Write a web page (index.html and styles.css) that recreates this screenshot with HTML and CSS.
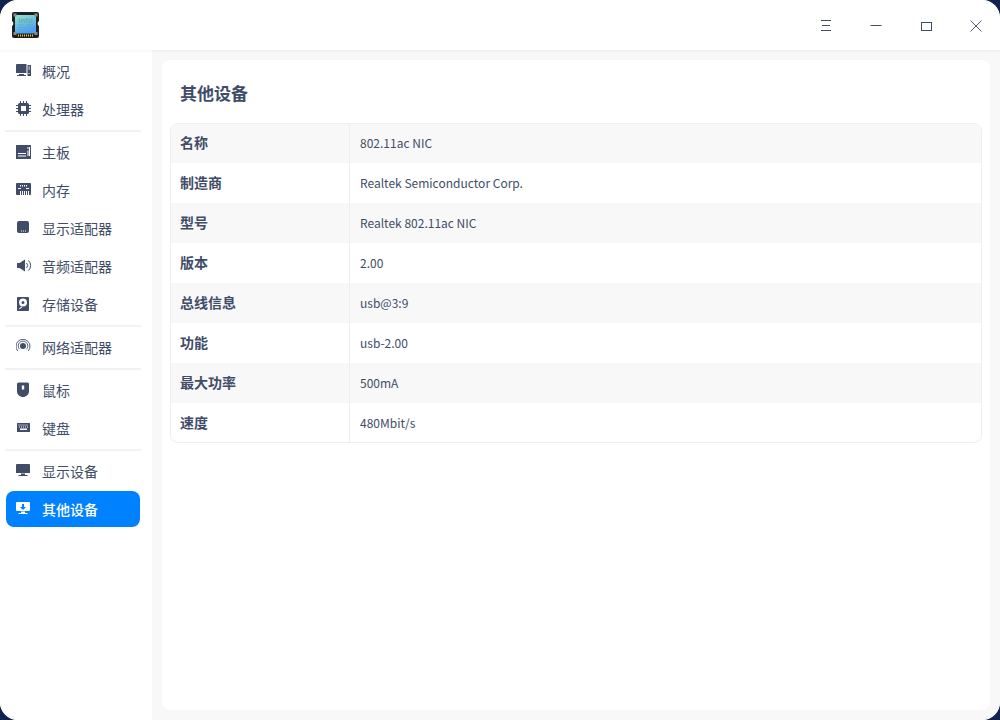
FILE: index.html
```html
<!DOCTYPE html>
<html lang="zh-CN">
<head>
<meta charset="utf-8">
<title>设备管理器</title>
<link rel="stylesheet" href="styles.css">
</head>
<body>
<div class="window">
  <header class="titlebar">
    <svg class="logo" width="30" height="28" viewBox="0 0 30 28">
      <defs><linearGradient id="lg" x1="0" y1="0" x2="0.4" y2="1"><stop offset="0" stop-color="#8fe8c4"/><stop offset="1" stop-color="#4f9cf5"/></linearGradient></defs>
      <path d="M3 1h23a2 2 0 0 1 2 2v7a3 3 0 0 0 0 5v10a2 2 0 0 1-2 2H3a2 2 0 0 1-2-2V15a3 3 0 0 0 0-5V3a2 2 0 0 1 2-2z" fill="#1d1f21"/>
      <rect x="4" y="4" width="21" height="18.500" fill="url(#lg)"/>
      <text x="14.500" y="11.500" class="logo-text" text-anchor="middle">info</text>
      <path d="M7 14h6M15 14h7M7 16.500h15M7 19h9" stroke="#5aa6d8" stroke-width="1"/>
      <path d="M7 24.500h15" stroke="#f2c230" stroke-width="2" stroke-dasharray="1 1"/>
      <g fill="#8a8a8a"><rect x="2.500" y="2.500" width="3" height="3"/><rect x="23.500" y="2.500" width="3" height="3"/><rect x="2.500" y="21" width="3" height="3"/><rect x="23.500" y="21" width="3" height="3"/></g>
    </svg>
    <div class="controls">
      <button class="ctl"><svg width="12" height="12" viewBox="0 0 12 12"><path d="M1 .5h10M2 5.500h8M1 10.500h10" stroke="#414d68" fill="none"/></svg></button>
      <button class="ctl"><svg width="12" height="12" viewBox="0 0 12 12"><path d="M.500 5.500h11" stroke="#414d68" fill="none"/></svg></button>
      <button class="ctl"><svg width="12" height="12" viewBox="0 0 12 12"><rect x="1.500" y="2.500" width="10" height="8" stroke="#414d68" fill="none"/></svg></button>
      <button class="ctl"><svg width="12" height="12" viewBox="0 0 12 12"><path d="M.5.500l11 11M11.500.500l-11 11" stroke="#414d68" stroke-width=".9" fill="none"/></svg></button>
    </div>
  </header>
  <div class="body">
    <nav class="sidebar">
      <div class="group">
        <a class="item"><svg class="ic" viewBox="0 0 16 16"><path d="M1 1h9.500v9H0V2a1 1 0 0 1 1-1zM3 11h5v1h2v1H1v-1h2z"/><path fill-rule="evenodd" d="M11.500 2H15v11h-3.500zM12.500 3.500v1h1.500v-1zM12.500 5.500v1h1.500v-1zM12.500 10v1h1v-1z"/></svg>概况</a>
        <a class="item"><svg class="ic" viewBox="0 0 16 16"><path fill-rule="evenodd" d="M3.500 2h8A1.500 1.500 0 0 1 13 3.500v8a1.500 1.500 0 0 1-1.500 1.500h-8A1.500 1.500 0 0 1 2 11.500v-8A1.500 1.500 0 0 1 3.500 2zM5 5v5h5V5z"/><path d="M4.500 0v2M7.500 0v2M10.500 0v2M4.500 13v2M7.500 13v2M10.500 13v2M0 4.500h2M0 7.500h2M0 10.500h2M13 4.500h2M13 7.500h2M13 10.500h2" stroke="#414d68" fill="none"/></svg>处理器</a>
      </div>
      <div class="group">
        <a class="item"><svg class="ic" viewBox="0 0 16 16"><path d="M.5 1h14a.5.500 0 0 1 .5.500v13a.5.500 0 0 1-.5.500H.5a.5.500 0 0 1-.5-.500v-13A.5.500 0 0 1 .5 1z"/><path d="M2 9.500h8M2 12h8M12 3v2M12 6.500v5.500M13.500 3v9" stroke="#fff" fill="none"/></svg>主板</a>
        <a class="item"><svg class="ic" viewBox="0 0 16 16"><path fill-rule="evenodd" d="M1 1h13a1 1 0 0 1 1 1v10a1 1 0 0 1-1 1h-1V9H3v4H1a1 1 0 0 1-1-1V2a1 1 0 0 1 1-1zM4 3v1.500h1V3zM6 3v1.500h1V3zM8 3v1.500h1V3zM10 3v1.500h1V3zM2 6v1h3V6zM10 6v1h3V6z"/><path d="M3 9h1v4H3zM5 9h1v4H5zM7 9h1v4H7zM9 9h1v4H9zM11 9h1v4h-1z"/></svg>内存</a>
        <a class="item"><svg class="ic" viewBox="0 0 16 16"><path fill-rule="evenodd" d="M3 1h8a2 2 0 0 1 2 2v8a2 2 0 0 1-2 2H3a2 2 0 0 1-2-2V3a2 2 0 0 1 2-2zM5 10.500v1h1v-1zM7 10.500v1h1v-1zM9 10.500v1h1v-1z"/></svg>显示适配器</a>
        <a class="item"><svg class="ic" viewBox="0 0 16 16"><path d="M1 5h2.500L9 1.500v12L3.500 10H1z"/><path d="M10.500 5a3.500 3.500 0 0 1 0 5M12.500 2.500a7 7 0 0 1 0 10" fill="none" stroke="#414d68"/></svg>音频适配器</a>
        <a class="item"><svg class="ic" viewBox="0 0 16 16"><path fill-rule="evenodd" d="M2 1h10a1 1 0 0 1 1 1v12a1 1 0 0 1-1 1H2a1 1 0 0 1-1-1V2a1 1 0 0 1 1-1zM7 2.500a4 4 0 1 0 0 8 4 4 0 0 0 0-8zM7 5a1.500 1.500 0 1 1 0 3 1.500 1.500 0 0 1 0-3zM3 12.500l2.500-2 .7.800-2.500 2z"/></svg>存储设备</a>
      </div>
      <div class="group">
        <a class="item"><svg class="ic" viewBox="0 0 16 16"><circle cx="7" cy="7" r="3"/><path d="M3.500 10.200a4.800 4.800 0 1 1 7 0M1.800 12a7 7 0 1 1 10.400 0" fill="none" stroke="#414d68" stroke-width=".9"/></svg>网络适配器</a>
      </div>
      <div class="group">
        <a class="item"><svg class="ic" viewBox="0 0 16 16"><path fill-rule="evenodd" d="M2.500 0.500h9A1.500 1.500 0 0 1 13 2v7.500C13 12.500 10 15 7 15S1 12.500 1 9.500V2A1.500 1.500 0 0 1 2.500 0.500zM5.800 3.500v4h2.400v-4z"/></svg>鼠标</a>
        <a class="item"><svg class="ic" viewBox="0 0 16 16"><path fill-rule="evenodd" d="M1.500 3h12a.5.500 0 0 1 .5.500v8a.5.500 0 0 1-.5.500h-12a.5.500 0 0 1-.5-.500v-8a.5.500 0 0 1 .5-.500zM2.500 4.500v1h1v-1zM4.500 4.500v1h1v-1zM6.500 4.500v1h1v-1zM8.500 4.500v1h1v-1zM10.500 4.500v1h1v-1zM3 6.500v1h1v-1zM5 6.500v1h1v-1zM7 6.500v1h1v-1zM9 6.500v1h1v-1zM11 6.500v1h1v-1zM4 8.500v1.500h7V8.500z"/></svg>键盘</a>
      </div>
      <div class="group last">
        <a class="item"><svg class="ic" viewBox="0 0 16 16"><path d="M1 1h12a1 1 0 0 1 1 1v8H0V2a1 1 0 0 1 1-1zM5 10.500h4V12h2.500v1h-9v-1H5z"/></svg>显示设备</a>
        <a class="item active"><svg class="ic" viewBox="0 0 16 16"><path fill-rule="evenodd" d="M1 1h12a1 1 0 0 1 1 1v7a1 1 0 0 1-1 1H1a1 1 0 0 1-1-1V2a1 1 0 0 1 1-1zM6 3v3H4l3 3 3-3H8V3z"/><path d="M5 10.500h4V12h2.500v1h-9v-1H5z"/></svg>其他设备</a>
      </div>
    </nav>
    <main class="content">
      <section class="panel">
        <h1 class="title">其他设备</h1>
        <div class="table">
          <div class="row"><div class="key">名称</div><div class="val">802.11ac NIC</div></div>
          <div class="row"><div class="key">制造商</div><div class="val">Realtek Semiconductor Corp.</div></div>
          <div class="row"><div class="key">型号</div><div class="val">Realtek 802.11ac NIC</div></div>
          <div class="row"><div class="key">版本</div><div class="val">2.00</div></div>
          <div class="row"><div class="key">总线信息</div><div class="val">usb@3:9</div></div>
          <div class="row"><div class="key">功能</div><div class="val">usb-2.00</div></div>
          <div class="row"><div class="key">最大功率</div><div class="val">500mA</div></div>
          <div class="row"><div class="key">速度</div><div class="val">480Mbit/s</div></div>
        </div>
      </section>
    </main>
  </div>
</div>
</body>
</html>
```
FILE: styles.css
```css
* { box-sizing: border-box; }
html, body { margin: 0; height: 100%; }
body {
  background: #10234f;
  font-family: "Noto Sans CJK SC", "Noto Sans", sans-serif;
  color: #414d68;
  overflow: hidden;
}
.window {
  width: 1000px;
  height: 720px;
  background: #fff;
  border-radius: 18px;
  overflow: hidden;
  display: flex;
  flex-direction: column;
}
.titlebar {
  height: 50px;
  flex: none;
  display: flex;
  align-items: center;
  justify-content: space-between;
  padding-left: 11px;
  background: #fff;
  box-shadow: 0 1px 3px rgba(0, 0, 0, .05);
  position: relative;
}
.logo { display: block; }
.logo-text { font: 700 8px "Liberation Sans", sans-serif; fill: #6aa9ad; }
.controls { display: flex; }
.ctl {
  width: 50px;
  height: 50px;
  border: 0;
  padding: 2px 0 0 2px;
  background: none;
  display: flex;
  align-items: center;
  justify-content: center;
}
.body { flex: 1; display: flex; min-height: 0; }
.sidebar {
  width: 152px;
  flex: none;
  background: #fff;
  padding: 3px 12px 0 6px;
  display: flex;
  flex-direction: column;
}
.group {
  display: flex;
  flex-direction: column;
  gap: 2px;
  padding-bottom: 3px;
  margin-bottom: 4px;
  position: relative;
}
.group::after {
  content: "";
  position: absolute;
  left: -1px;
  right: -1px;
  bottom: -2px;
  height: 2px;
  background: #f2f2f2;
}
.group.last::after { display: none; }
.item {
  height: 36px;
  display: flex;
  align-items: center;
  gap: 10px;
  padding-left: 10px;
  border-radius: 8px;
  font-size: 14px;
  line-height: 20px;
  white-space: nowrap;
}
.ic { width: 16px; height: 16px; flex: none; fill: #414d68; }
.active {
  background: #0081ff;
  color: #fff;
  font-weight: 500;
}
.active .ic { fill: #fff; }
.content {
  flex: 1;
  background: #f8f8f8;
  padding: 10px;
  min-width: 0;
}
.panel {
  height: 100%;
  background: #fff;
  border-radius: 8px;
  padding: 19px 8px 0;
}
.title {
  margin: 0 0 17px 10px;
  font-size: 17px;
  line-height: 27px;
  font-weight: 700;
}
.table {
  border: 1px solid #eeeeee;
  border-radius: 8px;
  overflow: hidden;
}
.row { display: flex; height: 40px; align-items: stretch; }
.row:first-child { height: 39px; }
.row:last-child { height: 39px; }
.row:nth-child(odd) { background: #f8f8f8; }
.key {
  width: 179px;
  flex: none;
  padding: 0 0 2px 9px;
  border-right: 1px solid #eeeeee;
  font-size: 14px;
  font-weight: 700;
  display: flex;
  align-items: center;
}
.val {
  padding: 0 0 2px 10px;
  font-size: 12px;
  display: flex;
  align-items: center;
}
.row:first-child .key, .row:first-child .val { padding-bottom: 3px; }
.row:last-child .key, .row:last-child .val { padding-bottom: 1px; }
```
